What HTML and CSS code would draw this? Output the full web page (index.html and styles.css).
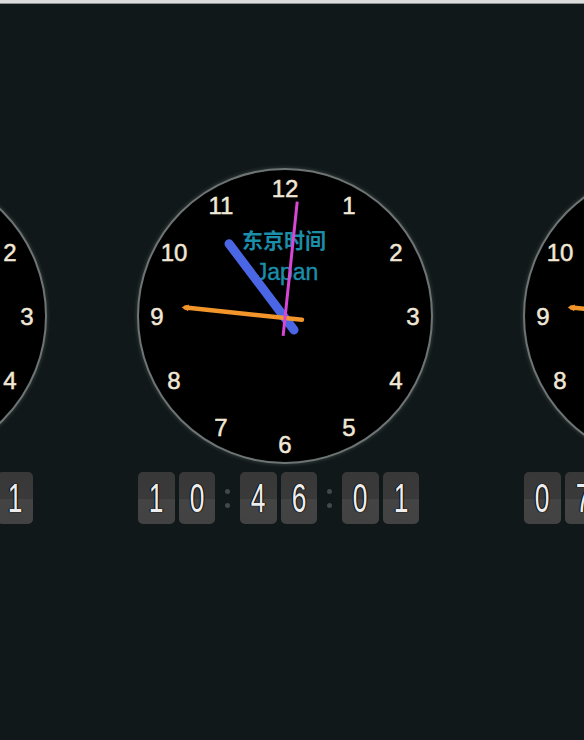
FILE: index.html
```html
<!DOCTYPE html>
<html lang="zh">
<head>
<meta charset="utf-8">
<title>World Clock</title>
<link rel="stylesheet" href="styles.css">
</head>
<body>
<div class="topbar"></div>
<main class="row">
  <section class="unit">
    <div class="clock">
      <svg class="face" viewBox="0 0 296 296" width="296" height="296">
        <g class="nums">
          <text x="148" y="20">12</text><text x="212" y="37">1</text><text x="259" y="84">2</text>
          <text x="276" y="148">3</text><text x="259" y="212">4</text><text x="212" y="259">5</text>
          <text x="148" y="276">6</text><text x="84" y="259">7</text><text x="37" y="212">8</text>
          <text x="20" y="148">9</text><text x="37" y="84">10</text><text x="84" y="37">11</text>
        </g>
        <text class="city" x="148" y="71">北京时间</text>
        <text class="country" x="148" y="104">China</text>
        <g transform="translate(148 150)">
          <line class="hour" x1="0" y1="15" x2="0" y2="-93" transform="rotate(293)"/>
          <line class="minute" x1="0" y1="17" x2="0" y2="-100" transform="rotate(276)"/>
          <line class="second" x1="0" y1="18" x2="0" y2="-117" transform="rotate(6)"/>
        </g>
      </svg>
    </div>
    <div class="digits">
      <span class="d"><b>0</b></span><span class="d"><b>9</b></span><span class="colon"><i></i><i></i></span>
      <span class="d"><b>4</b></span><span class="d"><b>6</b></span><span class="colon"><i></i><i></i></span>
      <span class="d"><b>0</b></span><span class="d"><b>1</b></span>
    </div>
  </section>

  <section class="unit">
    <div class="clock">
      <svg class="face" viewBox="0 0 296 296" width="296" height="296">
        <g class="nums">
          <text x="148" y="20">12</text><text x="212" y="37">1</text><text x="259" y="84">2</text>
          <text x="276" y="148">3</text><text x="259" y="212">4</text><text x="212" y="259">5</text>
          <text x="148" y="276">6</text><text x="84" y="259">7</text><text x="37" y="212">8</text>
          <text x="20" y="148">9</text><text x="37" y="84">10</text><text x="84" y="37">11</text>
        </g>
        <text class="city" x="147" y="71">东京时间</text>
        <text class="country" x="150" y="104">Japan</text>
        <g transform="translate(148 150)">
          <line class="hour" x1="0" y1="15" x2="0" y2="-93" transform="rotate(323)"/>
          <g transform="rotate(276)">
            <line class="minute" x1="0" y1="17" x2="0" y2="-100"/>
            <polygon class="tip" points="0,-104 -3.5,-97 3.5,-97"/>
          </g>
          <line class="second" x1="0" y1="18" x2="0" y2="-117" transform="rotate(6)"/>
        </g>
      </svg>
    </div>
    <div class="digits">
      <span class="d"><b>1</b></span><span class="d"><b>0</b></span><span class="colon"><i></i><i></i></span>
      <span class="d"><b>4</b></span><span class="d"><b>6</b></span><span class="colon"><i></i><i></i></span>
      <span class="d"><b>0</b></span><span class="d"><b>1</b></span>
    </div>
  </section>

  <section class="unit">
    <div class="clock">
      <svg class="face" viewBox="0 0 296 296" width="296" height="296">
        <g class="nums">
          <text x="148" y="20">12</text><text x="212" y="37">1</text><text x="259" y="84">2</text>
          <text x="276" y="148">3</text><text x="259" y="212">4</text><text x="212" y="259">5</text>
          <text x="148" y="276">6</text><text x="84" y="259">7</text><text x="37" y="212">8</text>
          <text x="20" y="148">9</text><text x="37" y="84">10</text><text x="84" y="37">11</text>
        </g>
        <text class="city" x="148" y="71">曼谷时间</text>
        <text class="country" x="148" y="104">Thailand</text>
        <g transform="translate(148 150)">
          <line class="hour" x1="0" y1="15" x2="0" y2="-93" transform="rotate(233)"/>
          <g transform="rotate(276)">
            <line class="minute" x1="0" y1="17" x2="0" y2="-100"/>
            <polygon class="tip" points="0,-104 -3.5,-97 3.5,-97"/>
          </g>
          <line class="second" x1="0" y1="18" x2="0" y2="-117" transform="rotate(6)"/>
        </g>
      </svg>
    </div>
    <div class="digits">
      <span class="d"><b>0</b></span><span class="d"><b>7</b></span><span class="colon"><i></i><i></i></span>
      <span class="d"><b>4</b></span><span class="d"><b>6</b></span><span class="colon"><i></i><i></i></span>
      <span class="d"><b>0</b></span><span class="d"><b>1</b></span>
    </div>
  </section>
</main>
</body>
</html>
```

FILE: styles.css
```css
html, body {
  margin: 0;
  padding: 0;
  height: 100%;
  overflow: hidden;
  background: #11181a;
  font-family: "Liberation Sans", Arial, sans-serif;
}

.topbar {
  height: 3px;
  background: #dcdcdc;
  border-bottom: 1px solid #8c8f90;
}

.row {
  width: 584px;
  box-sizing: border-box;
  padding: 164px 14px 0 0;
  display: flex;
  justify-content: center;
  gap: 90px;
}

.unit {
  flex: 0 0 296px;
  width: 296px;
  display: flex;
  flex-direction: column;
}

.clock {
  width: 296px;
  height: 296px;
  border-radius: 50%;
  background: #000;
  box-sizing: border-box;
  border: 2px solid #6d7473;
  box-shadow: 0 0 4px rgba(200, 210, 210, 0.25);
  overflow: hidden;
}

.face {
  display: block;
  margin: -2px;
}

.nums text {
  fill: #f1e7d6;
  stroke: #f1e7d6;
  stroke-width: 0.5;
  font-family: "Liberation Sans", Arial, sans-serif;
  font-size: 24px;
  text-anchor: middle;
  dominant-baseline: central;
}

.city {
  fill: #1b8eaa;
  font-family: "Noto Sans CJK SC", "Noto Sans", sans-serif;
  font-size: 21px;
  font-weight: 700;
  text-anchor: middle;
  dominant-baseline: central;
}

.country {
  fill: #1b8eaa;
  stroke: #1b8eaa;
  stroke-width: 0.4;
  font-family: "Liberation Sans", Arial, sans-serif;
  font-size: 23px;
  text-anchor: middle;
  dominant-baseline: central;
}

.hour {
  stroke: #4a66e4;
  stroke-width: 9;
  stroke-linecap: round;
}

.minute {
  stroke: #f2962c;
  stroke-width: 4.5;
  stroke-linecap: round;
}

.tip {
  fill: #f2962c;
}

.second {
  stroke: #d846d6;
  stroke-width: 3;
  stroke-linecap: butt;
}

.digits {
  margin-top: 8px;
  margin-left: 1px;
  display: flex;
  gap: 4px;
}

.d {
  width: 36.5px;
  height: 52px;
  border-radius: 5px;
  background: linear-gradient(to bottom, #383838 0%, #3a3a3a 49%, #2e2e2e 50%, #444444 52%, #424242 100%);
  display: flex;
  align-items: center;
  justify-content: center;
  overflow: hidden;
}

.d b {
  display: inline-block;
  font-family: "Liberation Sans", Arial, sans-serif;
  font-weight: normal;
  font-size: 40px;
  line-height: 1;
  color: #eeeeee;
  transform: scaleX(0.66);
  text-shadow: 0 0 1px #000, 1px 0 1px #000, -1px 0 1px #000;
}

.colon {
  width: 17px;
  height: 52px;
  display: flex;
  flex-direction: column;
  align-items: center;
  justify-content: center;
  gap: 9px;
}

.colon i {
  display: block;
  width: 5px;
  height: 5px;
  border-radius: 50%;
  background: #43484a;
}
```
